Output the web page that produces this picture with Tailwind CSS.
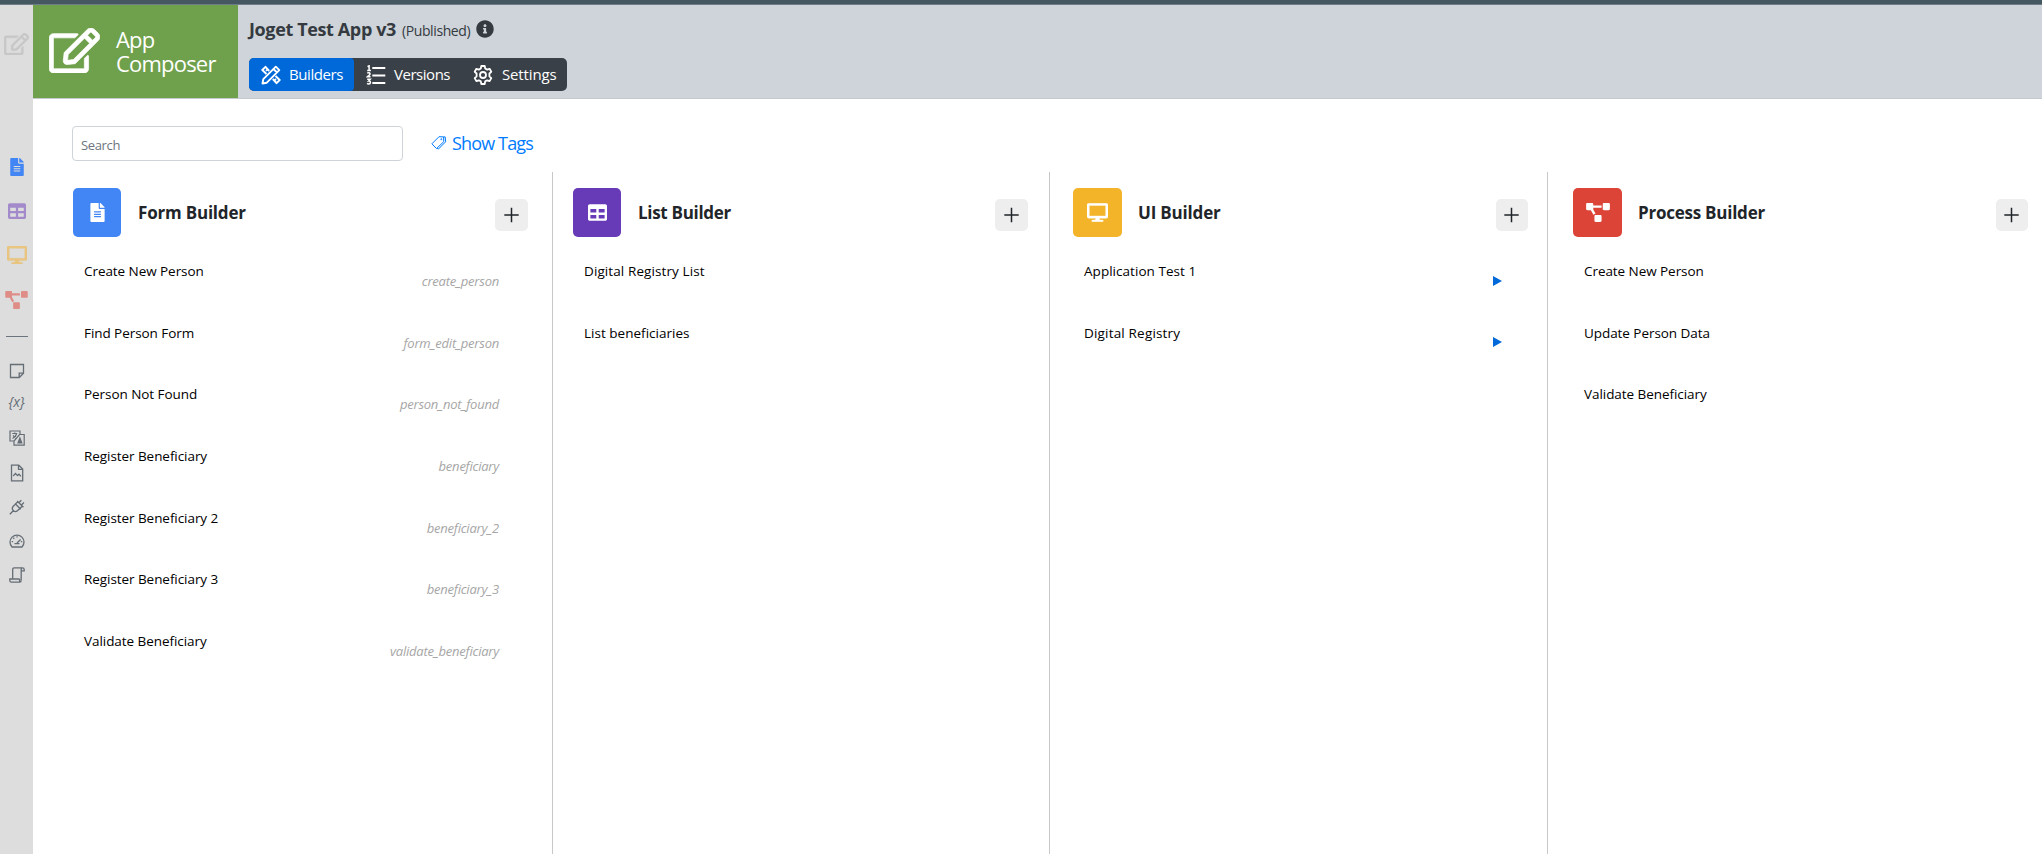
<!DOCTYPE html>
<html lang="en">
<head>
<meta charset="utf-8">
<title>App Composer</title>
<script src="https://cdn.jsdelivr.net/npm/@tailwindcss/browser@4"></script>
</head>
<body class="w-[2042px] h-[854px] overflow-hidden bg-white font-['Open_Sans',sans-serif] text-[#212529]">
<svg class="hidden">
  <symbol id="edit" viewBox="0 0 576 512"><path fill="currentColor" stroke="currentColor" stroke-width="8" d="M402.3 344.9l32-32c5-5 13.7-1.5 13.7 5.7V464c0 26.5-21.5 48-48 48H48c-26.5 0-48-21.5-48-48V112c0-26.5 21.5-48 48-48h273.5c7.1 0 10.7 8.6 5.7 13.7l-32 32c-1.5 1.5-3.5 2.3-5.7 2.3H48v352h352V350.5c0-2.1.8-4.1 2.3-5.6zm156.6-201.8L296.3 405.7l-90.4 10c-26.2 2.9-48.5-19.2-45.6-45.6l10-90.4L432.9 17.1c22.9-22.9 59.9-22.9 82.7 0l43.2 43.2c22.9 22.9 22.9 60 .1 82.8zM460.1 174L402 115.9 216.2 301.8l-7.3 65.3 65.3-7.3L460.1 174zm64.8-79.7l-43.2-43.2c-4.1-4.1-10.8-4.1-14.8 0L436 82l58.1 58.1 30.9-30.9c4-4.2 4-10.8-.1-14.9z"/></symbol>
  <symbol id="file" viewBox="0 0 384 512"><path fill="currentColor" d="M224 136V0H24C10.7 0 0 10.7 0 24v464c0 13.3 10.7 24 24 24h336c13.3 0 24-10.7 24-24V160H248c-13.2 0-24-10.8-24-24zm64 236c0 6.6-5.4 12-12 12H108c-6.6 0-12-5.4-12-12v-8c0-6.6 5.4-12 12-12h168c6.6 0 12 5.4 12 12v8zm0-64c0 6.6-5.4 12-12 12H108c-6.6 0-12-5.4-12-12v-8c0-6.6 5.4-12 12-12h168c6.6 0 12 5.4 12 12v8zm0-72v8c0 6.6-5.4 12-12 12H108c-6.6 0-12-5.4-12-12v-8c0-6.6 5.4-12 12-12h168c6.6 0 12 5.4 12 12zm96-114.1v6.1H256V0h6.1c6.4 0 12.5 2.5 17 7l97.900 98c4.500 4.500 7 10.600 7 16.900z"/></symbol>
  <symbol id="table" viewBox="0 0 512 512"><path fill="currentColor" d="M464 32H48C21.490 32 0 53.490 0 80v352c0 26.510 21.490 48 48 48h416c26.510 0 48-21.490 48-48V80c0-26.510-21.490-48-48-48zM224 416H64v-96h160v96zm0-160H64v-96h160v96zm224 160H288v-96h160v96zm0-160H288v-96h160v96z"/></symbol>
  <symbol id="desktop" viewBox="0 0 576 512"><path fill="currentColor" stroke="currentColor" stroke-width="10" d="M528 0H48C21.500 0 0 21.500 0 48v320c0 26.500 21.500 48 48 48h192l-16 48h-72c-13.300 0-24 10.700-24 24s10.700 24 24 24h272c13.300 0 24-10.700 24-24s-10.700-24-24-24h-72l-16-48h192c26.500 0 48-21.500 48-48V48c0-26.500-21.500-48-48-48zm-16 352H64V64h448v288z"/></symbol>
  <symbol id="flow" viewBox="0 0 640 512"><path fill="currentColor" d="M384 320H256c-17.670 0-32 14.330-32 32v128c0 17.670 14.330 32 32 32h128c17.670 0 32-14.330 32-32V352c0-17.670-14.330-32-32-32zM192 32c0-17.670-14.330-32-32-32H32C14.330 0 0 14.330 0 32v128c0 17.670 14.330 32 32 32h95.720l73.160 128.040C211.980 300.980 232.400 288 256 288h.28L192 175.510V128h224V64H192V32zM608 0H480c-17.670 0-32 14.330-32 32v128c0 17.670 14.330 32 32 32h128c17.670 0 32-14.330 32-32V32c0-17.670-14.330-32-32-32z"/></symbol>
  <symbol id="plus" viewBox="0 0 16 16"><path d="M7.500 .8v14.400M.3 8h14.400" fill="none" stroke="currentColor" stroke-width="1.500"/></symbol>
</svg>

<div class="h-[5px] bg-[#455761] border-b border-[#6d7c86]"></div>
<div class="flex h-[849px]">

  <!-- Quick navigation -->
  <nav class="w-[33px] shrink-0 bg-[#dddddd] flex flex-col items-center text-[#656d75]">
    <svg class="w-[25px] h-[22px] mt-7 shrink-0 text-[#c7c7c7]"><use href="#edit"/></svg>
    <svg class="w-[14px] h-[18px] mt-[103px] shrink-0 text-[#4285f4]"><use href="#file"/></svg>
    <svg class="w-[18px] h-[18px] mt-[26px] shrink-0 text-[#a28acb]"><use href="#table"/></svg>
    <svg class="w-[20px] h-[18px] mt-[26px] shrink-0 text-[#e9c581]"><use href="#desktop"/></svg>
    <svg class="w-[23px] h-[18px] mt-[27px] shrink-0 text-[#de8d87]"><use href="#flow"/></svg>
    <div class="w-[22px] h-px mt-[27px] ml-px shrink-0 bg-[#6c757d]"></div>
    <svg class="w-4 h-4 mt-[26px] ml-px shrink-0" viewBox="0 0 16 16" fill="none" stroke="currentColor" stroke-width="1.300"><path d="M1.500 1.500h13v8.800l-4.200 4.200H1.500z"/><path d="M10.200 14v-3.800h3.800" /></svg>
    <span class="mt-[13px] h-5 shrink-0 leading-5 text-[14px] italic tracking-[-0.2px]">{x}</span>
    <svg class="w-4 h-4 mt-[18px] ml-px shrink-0" viewBox="0 0 16 16" fill="none" stroke="currentColor" stroke-width="1.200"><path d="M5 11H1V1h10v3.500M11 4.500h4.200v10.700H5V11l5.500-6.500H11"/><path d="M3.200 3.500h5M5.700 2.500v1M4 5.300l3 3M7.500 4c-.6 2.300-2 3.700-4 4.500"/><path d="M9 13l1.900-5 1.900 5z" fill="currentColor"/></svg>
    <svg class="w-4 h-4 mt-[19px] ml-px shrink-0 overflow-visible" viewBox="0 0 16 16" fill="none" stroke="currentColor" stroke-width="1.300"><path d="M2.500.2h7.300L13.700 4v11.800H2.500zM9.500.4v4h4"/><path d="M4.200 11l2.300-2.600 2 2.200L10 9.200l2 2.200"/></svg>
    <svg class="w-4 h-4 mt-[18px] ml-px shrink-0" viewBox="0 0 16 16" fill="none" stroke="currentColor" stroke-width="1.300"><path d="M.8 15.200l4-4M6 4.500l5.700 5.700M6.500 5L4.300 7.200c-1.300 1.400-1.300 3 0 4.300s3 1.300 4.300 0l2.600-2.300M6.500 5l2.400-2.400M11.200 9.200l2.400-2.400M9.800 3.800L12.400 1.200M12.200 6.200l2.700-2.700M8.200 2l6.200 6.200"/></svg>
    <svg class="w-4 h-4 mt-[18px] ml-px shrink-0" viewBox="0 0 16 16" fill="none" stroke="currentColor" stroke-width="1.300"><path d="M3 14a7 7 0 1 1 10 0zM8 10l3.600-3.500M5.500 10.700h5"/><path d="M8 3.200v1.400M4.300 4.800l1 1M2.700 8.600h1.400M11.900 8.600h1.400" /></svg>
    <svg class="w-4 h-4 mt-[18px] ml-px shrink-0" viewBox="0 0 16 16" fill="none" stroke="currentColor" stroke-width="1.300"><path d="M3.700 11.800V2.500c0-1 .6-1.700 1.500-1.700h8.300c1 0 1.700.7 1.700 1.700v1.400h-3M12.200 13.300V2.500c0-1 .5-1.700 1.300-1.700M10.600 12H.8v1.500c0 1 .7 1.700 1.600 1.700h8.200c1 0 1.600-.7 1.600-1.700M10.600 12v1.500c0 1 .4 1.700.8 1.700"/></svg>
  </nav>

  <div class="flex-1 flex flex-col">
    <header class="h-[94px] shrink-0 flex bg-[#ced4da] border-b border-[#c6cace]">
      <div class="w-[205px] h-[93px] bg-[#6fa04c] text-white flex items-start">
        <svg class="w-[51px] h-[45px] ml-4 mt-[23px] shrink-0"><use href="#edit"/></svg>
        <div class="ml-4 mt-[23px] text-[22px] leading-[23.5px] tracking-[-0.8px]">App<br>Composer</div>
      </div>
      <div class="pl-[11px] text-[#343a40]">
        <div class="flex items-baseline h-[53px] pt-3 leading-6">
          <h1 class="text-[18px] font-bold tracking-[-0.37px]">Joget Test App v3</h1>
          <span class="text-[14px] ml-[6px] tracking-[-0.4px]">(Published)</span>
          <svg class="w-[18px] h-[18px] ml-[6px] self-start mt-[3px]" viewBox="0 0 512 512"><path fill="currentColor" d="M256 8C119.043 8 8 119.083 8 256c0 136.997 111.043 248 248 248s248-111.003 248-248C504 119.083 392.957 8 256 8zm0 110c23.196 0 42 18.804 42 42s-18.804 42-42 42-42-18.804-42-42 18.804-42 42-42zm56 254c0 6.627-5.373 12-12 12h-88c-6.627 0-12-5.373-12-12v-24c0-6.627 5.373-12 12-12h12v-64h-12c-6.627 0-12-5.373-12-12v-24c0-6.627 5.373-12 12-12h64c6.627 0 12 5.373 12 12v100h12c6.627 0 12 5.373 12 12v24z"/></svg>
        </div>
        <div class="flex w-[318px] h-[33px] rounded-[5px] overflow-hidden bg-[#3a4047] text-white text-[15px] leading-[33px]">
          <div class="w-[105px] bg-[#0069d9] rounded-r-[4px] flex items-center pl-3">
            <svg class="w-5 h-5 mr-[8px]" viewBox="0 0 20 20" fill="none" stroke="currentColor" stroke-width="1.900" stroke-linejoin="round"><path d="M8.200 6L4.500 1.800 1.300 5l4.200 4M11.800 14l3.700 4.200 3.200-3.200-4.200-4M5 5.800l1.500-1.500M13.500 15.500l1.500-1.500"/><path d="M1.500 18.500l.8-4.300L14.800 1.700l3.500 3.500L5.800 17.700zM12.500 4l3.500 3.500"/></svg>
            <span class="tracking-[-0.42px]">Builders</span>
          </div>
          <div class="w-[107px] flex items-center pl-3">
            <svg class="w-5 h-5 mr-[8px]" viewBox="0 0 20 20" fill="none" stroke="currentColor"><path stroke-width="1.800" d="M6.300 3h13M6.300 10.500h13M6.300 18h13"/><path stroke-width="1.500" d="M1.500 1.600l1.600-.8v4.700M1.200 5.400h3.700M1.200 8.200c1.300-.9 3-.4 2.800.9-.1 1-1.500 1.600-2.700 2.700h3.200M1.200 14.300h3L2.700 16c2.300-.2 2.300 2.900 0 2.900-.7 0-1.200-.1-1.600-.5"/></svg>
            <span class="tracking-[-0.47px]">Versions</span>
          </div>
          <div class="flex items-center pl-3">
            <svg class="w-5 h-5 mr-[9px]" viewBox="0 0 20 20" fill="none" stroke="currentColor" stroke-width="1.800" stroke-linejoin="round"><circle cx="10" cy="10" r="3"/><path d="M8.300 1h3.400l.5 2.500 1.900 1.100 2.500-.8 1.700 3-1.900 1.700v2.900l1.900 1.700-1.700 3-2.500-.8-1.900 1.100-.5 2.600H8.300l-.5-2.600-1.900-1.100-2.500.8-1.700-3 1.900-1.700V8.500L1.700 6.800l1.700-3 2.500.8 1.900-1.100z"/></svg>
            <span class="tracking-[-0.14px]">Settings</span>
          </div>
        </div>
      </div>
    </header>

    <main class="flex-1 flex flex-col">
      <div class="flex h-[73px] pt-[27px] pl-[39px]">
        <div class="w-[331px] h-[35px] rounded-[4px] border border-[#ced4da] pl-2 pt-[2px] text-[13px] leading-[32px] tracking-[-0.36px] text-[#6c757d]">Search</div>
        <a class="flex ml-[28px] text-[#007bff] text-[18px] leading-[35px] tracking-[-0.85px]">
          <svg class="w-4 h-4 mt-[9px] mr-[5px]" viewBox="0 0 16 16" fill="none" stroke="currentColor" stroke-width="1"><path d="M.9 8.800L8 1.700l4.500.2.300 4.700-7.300 7z"/><path d="M12.500 1.900h1.700l.4 4.900-7.200 7.300-1.300-.9"/><circle cx="10.300" cy="4.200" r=".5"/></svg>
          <span>Show Tags</span>
        </a>
      </div>

      <div class="flex-1 flex">
        <section class="w-[520px] border-r border-[#c8c8c8] pl-10 pt-4">
          <div class="flex h-[73px] items-start">
            <div class="w-12 h-[49px] rounded-[5px] bg-[#4285f4] text-white flex items-center justify-center"><svg class="w-[15px] h-[19px]"><use href="#file"/></svg></div>
            <h2 class="ml-[17px] mt-[13px] flex-1 text-[17px] leading-6 font-bold tracking-[-0.2px]">Form Builder</h2>
            <button class="w-[33px] h-8 mt-[11px] mr-6 rounded-[5px] bg-[#eeeeee] flex items-center justify-center"><svg class="w-4 h-4"><use href="#plus"/></svg></button>
          </div>
          <ul class="pl-[11px] pr-[53px] text-[13.500px] leading-5 text-black tracking-[-0.06px] [&>li]:h-[61.7px] [&>li]:flex [&>li]:justify-between [&_i]:mt-[10px] [&_i]:text-[13px] [&_i]:text-[#a6a6a6] [&_i]:tracking-[-0.23px]">
            <li>Create New Person<i>create_person</i></li>
            <li>Find Person Form<i>form_edit_person</i></li>
            <li>Person Not Found<i>person_not_found</i></li>
            <li>Register Beneficiary<i>beneficiary</i></li>
            <li>Register Beneficiary 2<i>beneficiary_2</i></li>
            <li>Register Beneficiary 3<i>beneficiary_3</i></li>
            <li>Validate Beneficiary<i>validate_beneficiary</i></li>
          </ul>
        </section>

        <section class="w-[497px] border-r border-[#c8c8c8] pl-5 pt-4">
          <div class="flex h-[73px] items-start">
            <div class="w-12 h-[49px] rounded-[5px] bg-[#673ab7] text-white flex items-center justify-center"><svg class="w-[19px] h-[19px]"><use href="#table"/></svg></div>
            <h2 class="ml-[17px] mt-[13px] flex-1 text-[17px] leading-6 font-bold tracking-[-0.3px]">List Builder</h2>
            <button class="w-[33px] h-8 mt-[11px] mr-[21px] rounded-[5px] bg-[#eeeeee] flex items-center justify-center"><svg class="w-4 h-4"><use href="#plus"/></svg></button>
          </div>
          <ul class="pl-[11px] text-[13.500px] leading-5 text-black tracking-[0.02px] [&>li]:h-[61.7px]">
            <li class="tracking-[0.1px]">Digital Registry List</li>
            <li>List beneficiaries</li>
          </ul>
        </section>

        <section class="w-[498px] border-r border-[#c8c8c8] pl-[23px] pt-4">
          <div class="flex h-[73px] items-start">
            <div class="w-[49px] h-[49px] rounded-[5px] bg-[#f3b42a] text-white flex items-center justify-center"><svg class="w-[21px] h-[19px]"><use href="#desktop"/></svg></div>
            <h2 class="ml-4 mt-[13px] flex-1 text-[17px] leading-6 font-bold tracking-[-0.18px]">UI Builder</h2>
            <button class="w-8 h-8 mt-[11px] mr-[19px] rounded-[5px] bg-[#eeeeee] flex items-center justify-center"><svg class="w-4 h-4"><use href="#plus"/></svg></button>
          </div>
          <ul class="pl-[11px] pr-[45px] text-[13.500px] leading-5 text-black tracking-[0.04px] [&>li]:h-[61.7px] [&>li]:flex [&>li]:justify-between">
            <li>Application Test 1<svg class="w-[9px] h-[10px] mt-[15px]" viewBox="0 0 9 10"><path fill="#0069d9" d="M0 0l9 5-9 5z"/></svg></li>
            <li class="tracking-[0.18px]">Digital Registry<svg class="w-[9px] h-[10px] mt-[14px]" viewBox="0 0 9 10"><path fill="#0069d9" d="M0 0l9 5-9 5z"/></svg></li>
          </ul>
        </section>

        <section class="flex-1 pl-[25px] pt-4">
          <div class="flex h-[73px] items-start">
            <div class="w-[49px] h-[49px] rounded-[5px] bg-[#db4437] text-white flex items-center justify-center"><svg class="w-6 h-[19px]"><use href="#flow"/></svg></div>
            <h2 class="ml-4 mt-[13px] flex-1 text-[17px] leading-6 font-bold tracking-[-0.24px]">Process Builder</h2>
            <button class="w-8 h-8 mt-[11px] mr-[14px] rounded-[5px] bg-[#eeeeee] flex items-center justify-center"><svg class="w-4 h-4"><use href="#plus"/></svg></button>
          </div>
          <ul class="pl-[11px] text-[13.500px] leading-5 text-black tracking-[-0.06px] [&>li]:h-[61.7px]">
            <li>Create New Person</li>
            <li>Update Person Data</li>
            <li>Validate Beneficiary</li>
          </ul>
        </section>
      </div>
    </main>
  </div>
</div>
</body>
</html>
